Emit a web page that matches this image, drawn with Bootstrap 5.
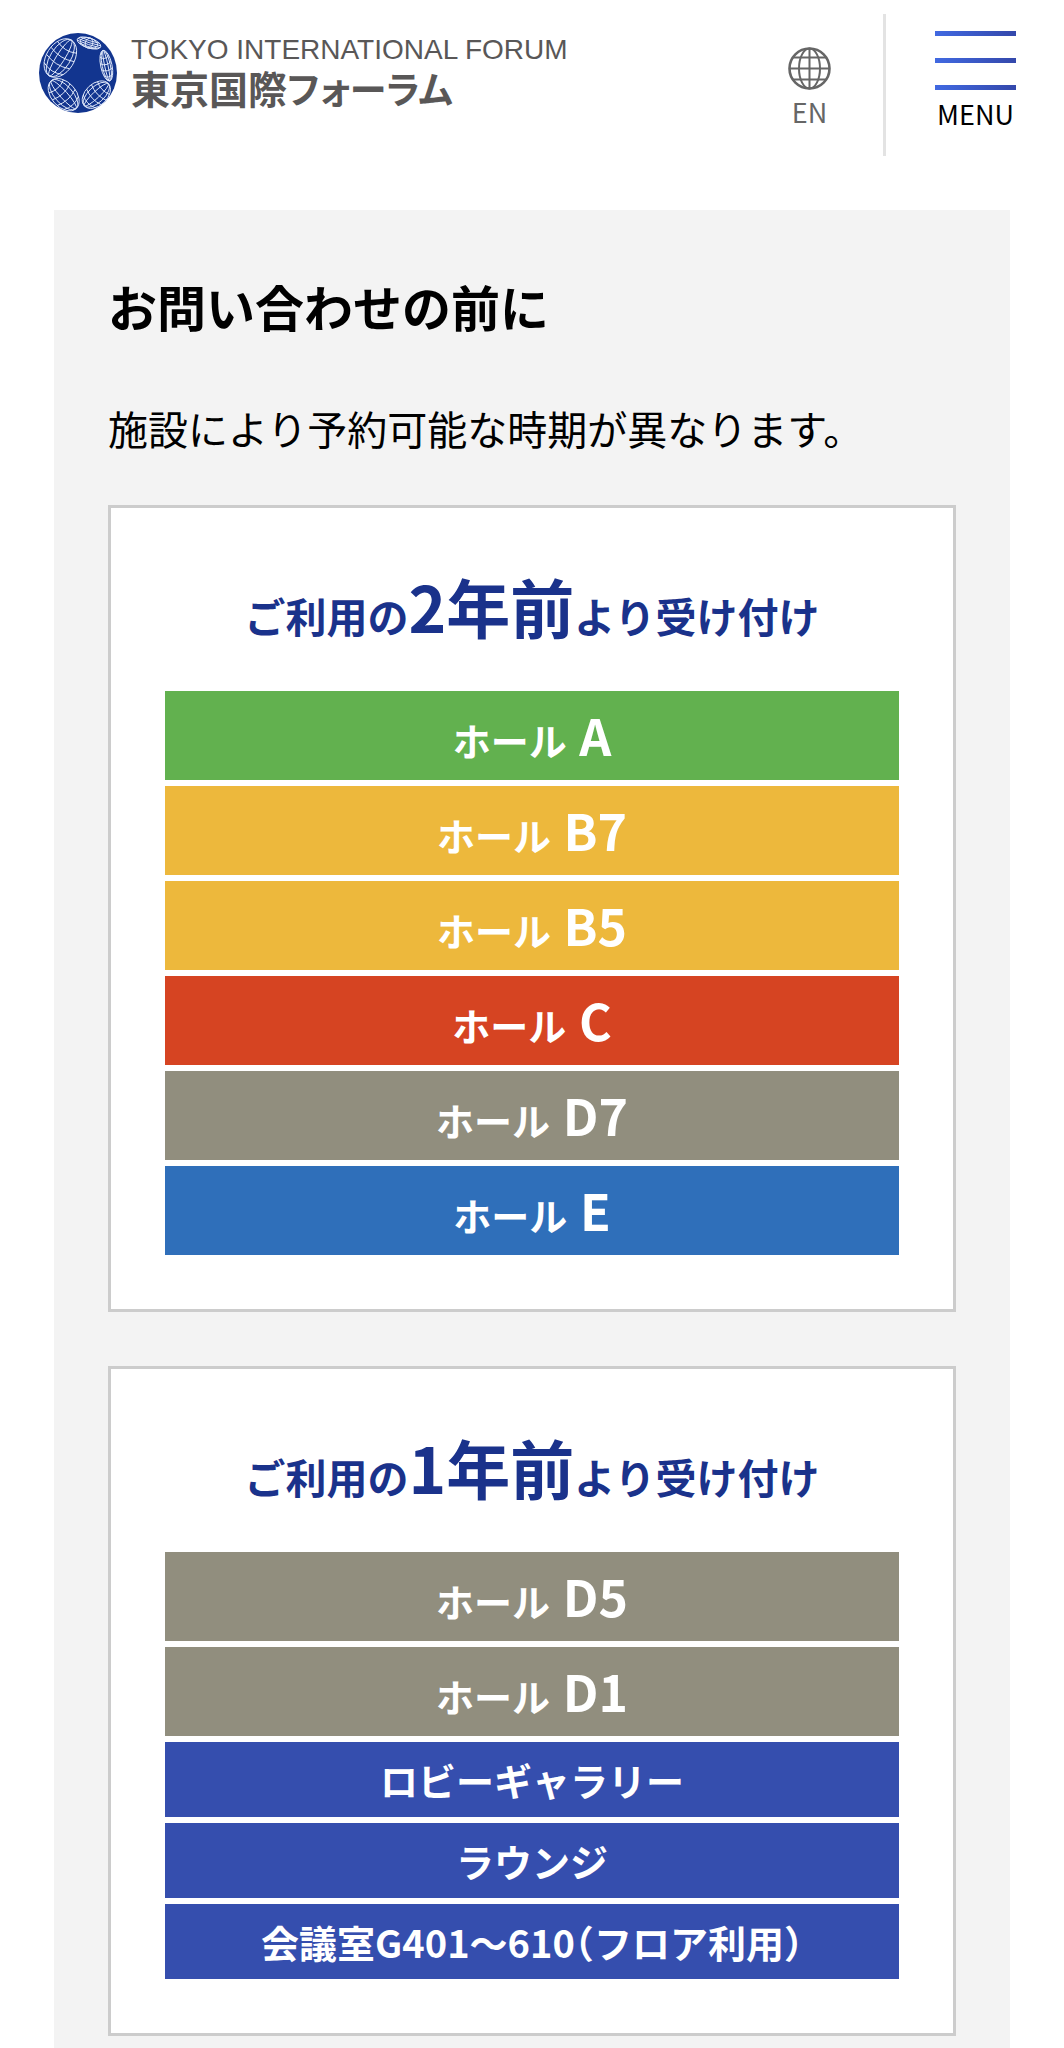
<!DOCTYPE html>
<html lang="ja">
<head>
<meta charset="utf-8">
<meta name="viewport" content="width=device-width, initial-scale=1">
<title>東京国際フォーラム</title>
<link href="https://cdn.jsdelivr.net/npm/bootstrap@5.3.0/dist/css/bootstrap.min.css" rel="stylesheet">
<style>
body { font-family: "Noto Sans CJK JP", sans-serif; color: #000; background: #fff; }
.site-header { height: 156px; padding-left: 39px; padding-right: 48px; }
.brand { color: #595757; padding-top: 33px; gap: 14px; }
.brand-en { font: 28px/34px "Liberation Sans", sans-serif; }
.brand-ja { font-size: 39px; line-height: 40px; font-weight: 700; font-feature-settings: "palt"; }
.brand-kana { font-size: 37px; }
.header-tools { padding-top: 14px; }
.lang-link { color: #666; font-size: 27px; line-height: 32px; padding: 33px 52px 0 0; gap: 6px; }
.menu-btn { font-size: 27px; line-height: 32px; padding: 17px 0 0 49px; height: 142px; border-left: 3px solid #e3e3e3; gap: 22px; color: #000; }
.menu-line { width: 81px; height: 5px; background: linear-gradient(90deg, #4169e1, #3448ab); }
.menu-word { margin-top: -14px; }
.panel-gray { background: #f3f3f3; margin: 54px 54px 0; padding: 54px; }
.panel-title { font-size: 49px; line-height: 84px; margin-bottom: 46px; }
.panel-text { font-size: 40px; line-height: 68px; margin-bottom: 43px; }
.period-box { border: 3px solid #ccc; padding: 54px; background: #fff; margin-bottom: 54px; }
.period-title { color: #1a328b; font-size: 41px; line-height: 86px; margin-bottom: 33px; }
.period-title strong { font-size: 64px; font-weight: 700; }
.hall-list { gap: 6px; }
.hall { font-size: 38px; line-height: 75px; font-weight: 700; color: #fff; }
.hall-lg { line-height: 81px; padding-top: 8px; }
.hall-lg b { font-size: 50px; line-height: 1; font-weight: 700; margin-left: 4px; }
.half-paren { font-feature-settings: "halt"; }
.hall-a { background: #62b14f; }
.hall-b { background: #edb83c; }
.hall-c { background: #d64422; }
.hall-d { background: #918e7e; }
.hall-e { background: #2f6fba; }
.hall-x { background: #354eae; }
</style>
</head>
<body>
<header class="site-header d-flex justify-content-between align-items-start">
  <a href="#" class="brand d-flex text-decoration-none">
    <svg width="78" height="80" viewBox="58 69 234 240" aria-hidden="true">
      <defs>
        <g id="orb" fill="none" stroke="#dfe8fa">
          <circle r="1" vector-effect="non-scaling-stroke"/>
          <ellipse rx=".3" ry="1" vector-effect="non-scaling-stroke"/>
          <ellipse rx=".72" ry="1" vector-effect="non-scaling-stroke"/>
          <path d="M-.8 -.6Q0 -.35 .8 -.6M-.97 -.2Q0 .06 .97 -.2M-.98 .2Q0 .46 .98 .2M-.8 .6Q0 .86 .8 .6" vector-effect="non-scaling-stroke"/>
        </g>
      </defs>
      <ellipse cx="175" cy="189" rx="117" ry="120" fill="#12358f"/>
      <use href="#orb" transform="translate(122 144) rotate(32) scale(42 63)"/>
      <use href="#orb" transform="translate(208 99) rotate(18) scale(37 15)"/>
      <use href="#orb" transform="translate(260 167) rotate(-12) scale(17 47)"/>
      <use href="#orb" transform="translate(230 254) rotate(47) scale(33 49)"/>
      <use href="#orb" transform="translate(132 254) rotate(-42) scale(37 56)"/>
    </svg>
    <span class="d-flex flex-column">
      <span class="brand-en">TOKYO INTERNATIONAL FORUM</span>
      <span class="brand-ja">東京国際<span class="brand-kana">フォーラム</span></span>
    </span>
  </a>
  <div class="header-tools d-flex align-items-start">
    <a href="#" class="lang-link d-flex flex-column align-items-center text-decoration-none">
      <svg width="43" height="43" viewBox="0 0 43 43" fill="none" stroke="#666" stroke-width="2" aria-hidden="true">
        <circle cx="21.500" cy="21.500" r="20" stroke-width="2.600"/>
        <ellipse cx="21.500" cy="21.500" rx="10.500" ry="20"/>
        <path d="M21.500 1v41M1 21.500h41M5 10.500h33M5 32.500h33"/>
      </svg>
      <span>EN</span>
    </a>
    <button type="button" class="menu-btn d-flex flex-column align-items-center bg-transparent border-top-0 border-end-0 border-bottom-0">
      <span class="menu-line"></span>
      <span class="menu-line"></span>
      <span class="menu-line"></span>
      <span class="menu-word">MENU</span>
    </button>
  </div>
</header>
<main>
  <section class="panel-gray">
    <h1 class="panel-title fw-bold">お問い合わせの前に</h1>
    <p class="panel-text">施設により予約可能な時期が異なります。</p>
    <div class="period-box">
      <h2 class="period-title fw-bold text-center">ご利用の<strong>2年前</strong>より受け付け</h2>
      <ul class="hall-list list-unstyled d-flex flex-column text-center mb-0">
        <li class="hall hall-lg hall-a">ホール <b>A</b></li>
        <li class="hall hall-lg hall-b">ホール <b>B7</b></li>
        <li class="hall hall-lg hall-b">ホール <b>B5</b></li>
        <li class="hall hall-lg hall-c">ホール <b>C</b></li>
        <li class="hall hall-lg hall-d">ホール <b>D7</b></li>
        <li class="hall hall-lg hall-e">ホール <b>E</b></li>
      </ul>
    </div>
    <div class="period-box mb-0">
      <h2 class="period-title fw-bold text-center">ご利用の<strong>1年前</strong>より受け付け</h2>
      <ul class="hall-list list-unstyled d-flex flex-column text-center mb-0">
        <li class="hall hall-lg hall-d">ホール <b>D5</b></li>
        <li class="hall hall-lg hall-d">ホール <b>D1</b></li>
        <li class="hall hall-x">ロビーギャラリー</li>
        <li class="hall hall-x">ラウンジ</li>
        <li class="hall hall-x">会議室G401～610<span class="half-paren">（</span>フロア利用<span class="half-paren">）</span></li>
      </ul>
    </div>
  </section>
</main>
<script src="https://cdn.jsdelivr.net/npm/bootstrap@5.3.0/dist/js/bootstrap.bundle.min.js"></script>
</body>
</html>
